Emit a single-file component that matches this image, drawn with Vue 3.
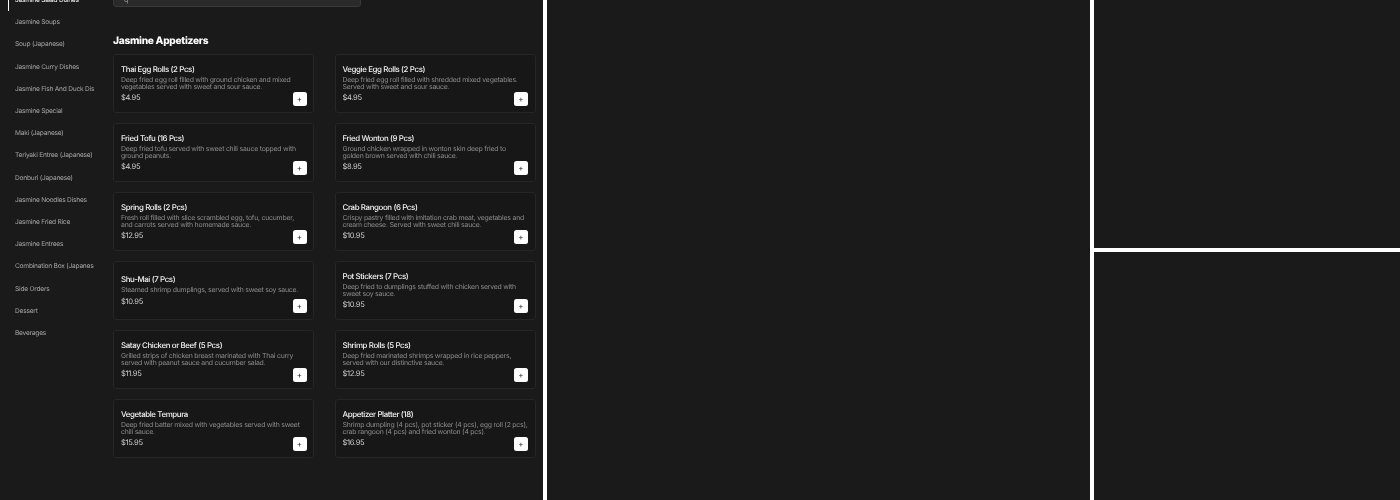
<template>
  <div class="grid">
    <div class="pane main-pane">
      <aside class="sidebar">
        <div
          v-for="(cat, i) in categories"
          :key="cat"
          class="cat"
          :class="{ active: i === 0 }"
        >
          <span class="cat-label">{{ cat }}</span>
        </div>
      </aside>
      <main class="menu">
        <div class="search"><span class="search-text">q</span></div>
        <h2 class="section-title">Jasmine Appetizers</h2>
        <div class="cards">
          <div v-for="item in items" :key="item.name" class="card">
            <div class="card-name">{{ item.name }}</div>
            <div class="card-desc">{{ item.desc }}</div>
            <div class="card-price">{{ item.price }}</div>
            <button class="add-btn">+</button>
          </div>
        </div>
      </main>
    </div>
    <div class="pane middle-pane"></div>
    <div class="right-col">
      <div class="pane"></div>
      <div class="pane"></div>
    </div>
  </div>
</template>

<script setup>
const categories = [
  'Jasmine Salad Dishes',
  'Jasmine Soups',
  'Soup (Japanese)',
  'Jasmine Curry Dishes',
  'Jasmine Fish And Duck Dishes',
  'Jasmine Special',
  'Maki (Japanese)',
  'Teriyaki Entree (Japanese)',
  'Donburi (Japanese)',
  'Jasmine Noodles Dishes',
  'Jasmine Fried Rice',
  'Jasmine Entrees',
  'Combination Box (Japanese)',
  'Side Orders',
  'Dessert',
  'Beverages',
]

const items = [
  { name: 'Thai Egg Rolls (2 Pcs)', desc: 'Deep fried egg roll filled with ground chicken and mixed\nvegetables served with sweet and sour sauce.', price: '$4.95' },
  { name: 'Veggie Egg Rolls (2 Pcs)', desc: 'Deep fried egg roll filled with shredded mixed vegetables.\nServed with sweet and sour sauce.', price: '$4.95' },
  { name: 'Fried Tofu (16 Pcs)', desc: 'Deep fried tofu served with sweet chili sauce topped with\nground peanuts.', price: '$4.95' },
  { name: 'Fried Wonton (9 Pcs)', desc: 'Ground chicken wrapped in wonton skin deep fried to\ngolden brown served with chili sauce.', price: '$8.95' },
  { name: 'Spring Rolls (2 Pcs)', desc: 'Fresh roll filled with slice scrambled egg, tofu, cucumber,\nand carrots served with homemade sauce.', price: '$12.95' },
  { name: 'Crab Rangoon (6 Pcs)', desc: 'Crispy pastry filled with imitation crab meat, vegetables and\ncream cheese. Served with sweet chili sauce.', price: '$10.95' },
  { name: 'Shu-Mai (7 Pcs)', desc: 'Steamed shrimp dumplings, served with sweet soy sauce.', price: '$10.95' },
  { name: 'Pot Stickers (7 Pcs)', desc: 'Deep fried to dumplings stuffed with chicken served with\nsweet soy sauce.', price: '$10.95' },
  { name: 'Satay Chicken or Beef (5 Pcs)', desc: 'Grilled strips of chicken breast marinated with Thai curry\nserved with peanut sauce and cucumber salad.', price: '$11.95' },
  { name: 'Shrimp Rolls (5 Pcs)', desc: 'Deep fried marinated shrimps wrapped in rice peppers,\nserved with our distinctive sauce.', price: '$12.95' },
  { name: 'Vegetable Tempura', desc: 'Deep fried batter mixed with vegetables served with sweet\nchili sauce.', price: '$15.95' },
  { name: 'Appetizer Platter (18)', desc: 'Shrimp dumpling (4 pcs), pot sticker (4 pcs), egg roll (2 pcs),\ncrab rangoon (4 pcs) and fried wonton (4 pcs).', price: '$16.95' },
]
</script>

<style>
html, body {
  margin: 0;
  background: #fff;
}
</style>

<style scoped>
.grid {
  display: grid;
  grid-template-columns: 543px 543px 306px;
  column-gap: 4px;
  width: 1400px;
  height: 500px;
  background: #fff;
  overflow: hidden;
  font-family: Inter, "Liberation Sans", sans-serif;
  text-rendering: geometricPrecision;
}

.pane {
  background: #1a1a1a;
  overflow: hidden;
  min-height: 0;
}

.right-col {
  display: grid;
  grid-template-rows: 248px 248px;
  row-gap: 4px;
}

.main-pane {
  display: flex;
  align-items: flex-start;
}

.sidebar {
  flex: 0 0 86px;
  width: 86px;
  margin-left: 8px;
  margin-top: -11px;
  overflow: hidden;
  filter: grayscale(1) blur(0.25px);
}

.cat {
  height: 22.2px;
  display: flex;
  align-items: center;
  padding-left: 6px;
  border-left: 1px solid transparent;
  white-space: nowrap;
  font-size: 6.6px;
  letter-spacing: -0.22px;
  color: #a6a6a6;
}

.cat.active {
  border-left-color: #fff;
  color: #fff;
}

.menu {
  margin-left: 19px;
  width: 424px;
  margin-top: -21px;
  filter: grayscale(1) blur(0.25px);
}

.search {
  width: 248px;
  height: 28px;
  box-sizing: border-box;
  background: #2a2a2a;
  border: 1px solid #383838;
  border-radius: 3px;
  display: flex;
  align-items: flex-end;
  padding: 0 0 2px 10px;
  font-size: 7px;
  color: #999;
}

.section-title {
  margin: 26.5px 0 6.5px;
  font-size: 10.2px;
  letter-spacing: -0.3px;
  line-height: 14px;
  font-weight: 800;
  color: #fff;
}

.cards {
  display: grid;
  grid-template-columns: 201px 201px;
  column-gap: 20.5px;
  row-gap: 10px;
}

.card {
  position: relative;
  box-sizing: border-box;
  height: 59px;
  padding: 0 7px;
  display: flex;
  flex-direction: column;
  justify-content: center;
  background: #171717;
  border: 1px solid #262626;
  border-radius: 3px;
}

.card-name {
  font-size: 7.9px;
  letter-spacing: -0.38px;
  line-height: 10px;
  font-weight: 500;
  color: #f2f2f2;
  white-space: nowrap;
}

.card-desc {
  margin-top: 2px;
  font-size: 6.9px;
  letter-spacing: -0.22px;
  line-height: 7.3px;
  color: #8c8c8c;
  white-space: pre;
}

.card-price {
  margin-top: 3px;
  font-size: 7.6px;
  letter-spacing: -0.35px;
  line-height: 10px;
  color: #d0d0d0;
}

.add-btn {
  position: absolute;
  right: 6.5px;
  bottom: 6px;
  width: 14px;
  height: 14px;
  padding: 0;
  border: none;
  border-radius: 2.5px;
  background: #fff;
  color: #222;
  font-family: inherit;
  font-size: 8px;
  line-height: 14px;
}
</style>
